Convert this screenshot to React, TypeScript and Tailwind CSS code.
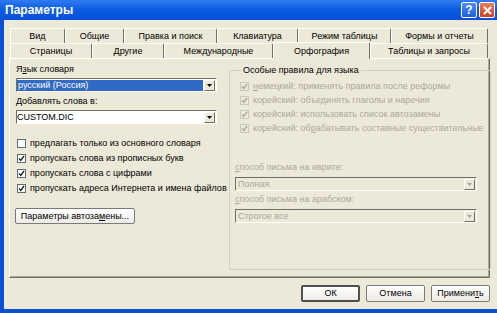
import React from 'react';

const font = { fontFamily: '"Liberation Sans", Arial, sans-serif' };

const row1 = [
  { label: 'Вид', w: 'w-[55px]' },
  { label: 'Общие', w: 'w-[59px]' },
  { label: 'Правка и поиск', w: 'w-[93px]' },
  { label: 'Клавиатура', w: 'w-[81px]' },
  { label: 'Режим таблицы', w: 'w-[93px]' },
  { label: 'Формы и отчеты', w: 'w-[97px]' },
];

const row2 = [
  { label: 'Страницы', w: 'w-[82px]' },
  { label: 'Другие', w: 'w-[72px]' },
  { label: 'Международные', w: 'w-[109px]' },
  { label: 'Орфография', w: 'w-[97px]', active: true },
  { label: 'Таблицы и запросы', w: 'w-[118px]' },
];

const Tab: React.FC<{ label: string; w: string; active?: boolean }> = ({ label, w, active }) => (
  <div
    className={`${w} flex items-center justify-center border-t border-l border-white border-r border-r-[#716F64] rounded-t-[2px] text-[9px] leading-none text-black ${
      active ? 'h-[17px] -mt-[2px] relative z-10 bg-[#ECE9D8] -mb-[1px]' : 'h-[15px]'
    }`}
  >
    {label}
  </div>
);

const Arrow: React.FC<{ disabled?: boolean }> = ({ disabled }) => (
  <div className="w-[11px] h-[11px] flex items-center justify-center bg-[#ECE9D8] border border-t-white border-l-white border-r-[#716F64] border-b-[#716F64]">
    <svg width="5" height="3" viewBox="0 0 5 3">
      <path d="M0 0h5L2.5 3z" fill={disabled ? '#ACA899' : '#000'} />
    </svg>
  </div>
);

const Combo: React.FC<{ value: string; selected?: boolean; disabled?: boolean; w: string }> = ({ value, selected, disabled, w }) => (
  <div
    className={`${w} h-[14px] flex items-center border border-t-[#716F64] border-l-[#716F64] border-r-white border-b-white ${
      disabled ? 'bg-[#ECE9D8]' : 'bg-white'
    }`}
  >
    <div className="flex-1 min-w-0 h-full flex items-center overflow-hidden pr-[1px]">
      <span
        className={`h-[11px] flex items-center text-[9px] leading-none whitespace-nowrap ${
          selected ? 'bg-[#316AC5] text-white w-full pl-[1px]' : disabled ? 'text-[#ACA899] pl-[2px]' : 'text-black'
        }`}
      >
        {value}
      </span>
    </div>
    <div className="pr-[1px]">
      <Arrow disabled={disabled} />
    </div>
  </div>
);

const Check: React.FC<{ checked?: boolean; disabled?: boolean }> = ({ checked, disabled }) => (
  <div
    className={`w-[9px] h-[9px] shrink-0 flex items-center justify-center border ${
      disabled ? 'border-[#CAC8BB] bg-[#ECE9D8]' : 'border-[#5B6B7E] bg-white'
    }`}
  >
    {checked && (
      <svg width="7" height="7" viewBox="0 0 7 7">
        <path d="M1 3.5l1.8 2L6 1" fill="none" stroke={disabled ? '#ACA899' : '#1E2A1E'} strokeWidth="1.4" />
      </svg>
    )}
  </div>
);

const CheckRow: React.FC<{ checked?: boolean; disabled?: boolean; h: string; children: React.ReactNode }> = ({ checked, disabled, h, children }) => (
  <div className={`${h} flex items-center gap-[4px] text-[9px] leading-none whitespace-nowrap ${disabled ? 'text-[#ACA899]' : 'text-black'}`}>
    <Check checked={checked} disabled={disabled} />
    <span>{children}</span>
  </div>
);

const Btn: React.FC<{ label: React.ReactNode; w: string; def?: boolean }> = ({ label, w, def }) => (
  <div
    className={`${w} h-[17px] flex items-center justify-center rounded-[2px] bg-gradient-to-b from-white to-[#ECEBE5] text-[9px] leading-none text-black ${
      def ? 'border-2 border-[#4F4F4F]' : 'border border-[#7A7A7A]'
    }`}
  >
    {label}
  </div>
);

export default function App() {
  return (
    <div className="w-[497px] h-[313px] flex flex-col overflow-hidden bg-[#ECE9D8]" style={font}>
      {/* title bar */}
      <div className="h-[20px] shrink-0 flex items-center justify-between pl-[5px] pr-[2px] bg-gradient-to-b from-[#2F7BF2] via-[#0A5BE0] to-[#0750D8]">
        <span className="text-white font-bold text-[12px] leading-none">Параметры</span>
        <div className="flex gap-[2px]">
          <div className="w-[16px] h-[16px] rounded-[2px] border border-white bg-gradient-to-b from-[#4E8CF7] to-[#1F5FDB] flex items-center justify-center text-white font-bold text-[12px] leading-none">
            ?
          </div>
          <div className="w-[16px] h-[16px] rounded-[2px] border border-white bg-gradient-to-b from-[#E9805F] to-[#C8401E] flex items-center justify-center">
            <svg width="9" height="9" viewBox="0 0 9 9">
              <path d="M1 1l7 7M8 1L1 8" stroke="#fff" strokeWidth="2" />
            </svg>
          </div>
        </div>
      </div>

      {/* body */}
      <div className="flex-1 flex flex-col border-l-4 border-b-4 border-[#0A4FD6] pt-[8px] pl-[5px] pr-[7px]">
        {/* tabs */}
        <div className="flex pl-[1px]">
          {row1.map((t) => (
            <Tab key={t.label} {...t} />
          ))}
        </div>
        <div className="flex pl-[1px] items-end">
          {row2.map((t) => (
            <Tab key={t.label} {...t} />
          ))}
        </div>

        {/* panel */}
        <div className="w-[481px] h-[220px] flex border border-t-white border-l-white border-r-[#716F64] border-b-[#716F64] shadow-[inset_-1px_-1px_0_#ACA899] pl-[5px] pt-[5px]">
          {/* left column */}
          <div className="w-[202px] flex flex-col">
            <div className="h-[11px] pl-[1px] flex items-center text-[9px] leading-none text-black">
              Я<u>з</u>ык словаря
            </div>
            <div className="mt-[3px] pl-[1px]">
              <Combo w="w-[201px]" value="русский (Россия)" selected />
            </div>
            <div className="mt-[4px] h-[11px] pl-[1px] flex items-center text-[9px] leading-none text-black">
              <u>Д</u>обавлять слова в:
            </div>
            <div className="mt-[3px] pl-[1px]">
              <Combo w="w-[201px]" value="CUSTOM.DIC" />
            </div>
            <div className="mt-[12px] pl-[2px] flex flex-col">
              <CheckRow h="h-[15px]">предлагать только из основного словаря</CheckRow>
              <CheckRow h="h-[15px]" checked>пропускать слова из прописных букв</CheckRow>
              <CheckRow h="h-[15px]" checked>пропускать слова с цифрами</CheckRow>
              <CheckRow h="h-[15px]" checked>пропускать адреса Интернета и имена файлов</CheckRow>
            </div>
            <div className="mt-[12px]">
              <div className="w-[120px] h-[16px] flex items-center justify-center rounded-[2px] border border-[#7A7A7A] bg-gradient-to-b from-white to-[#ECEBE5] text-[9px] leading-none text-black">
                Параметры автоза<u>м</u>ены...
              </div>
            </div>
          </div>

          {/* right group */}
          <fieldset className="ml-[12px] w-[254px] h-[206px] border border-[#D0D0BF] rounded-[2px] pl-[10px] pr-[6px]">
            <legend className="ml-[1px] px-[2px] text-[9px] leading-[12px] text-black">Особые правила для языка</legend>
            <div className="mt-[3px] flex flex-col">
              <CheckRow h="h-[14px]" checked disabled><u>н</u>емецкий: применять правила после реформы</CheckRow>
              <CheckRow h="h-[14px]" checked disabled>корейский: объединять глаголы и наречия</CheckRow>
              <CheckRow h="h-[14px]" checked disabled>корейский: использовать список автозамены</CheckRow>
              <CheckRow h="h-[14px]" checked disabled>корейский: об<u>р</u>абатывать составные существительные</CheckRow>
            </div>
            <div className="-ml-[5px] mt-[27px] flex flex-col">
              <div className="h-[11px] flex items-center text-[9px] leading-none text-[#ACA899]">
                <u>с</u>пособ письма на иврите:
              </div>
              <div className="mt-[4px]">
                <Combo w="w-[242px]" value="Полная" disabled />
              </div>
              <div className="mt-[3px] h-[11px] flex items-center text-[9px] leading-none text-[#ACA899]">
                <u>с</u>пособ письма на арабском:
              </div>
              <div className="mt-[4px]">
                <Combo w="w-[242px]" value="Строгое все" disabled />
              </div>
            </div>
          </fieldset>
        </div>

        {/* bottom buttons */}
        <div className="mt-[7px] flex justify-end gap-[6px]">
          <Btn w="w-[59px]" label="ОК" def />
          <Btn w="w-[59px]" label="Отмена" />
          <Btn w="w-[59px]" label={<>Примени<u>т</u>ь</>} />
        </div>
      </div>
    </div>
  );
}
